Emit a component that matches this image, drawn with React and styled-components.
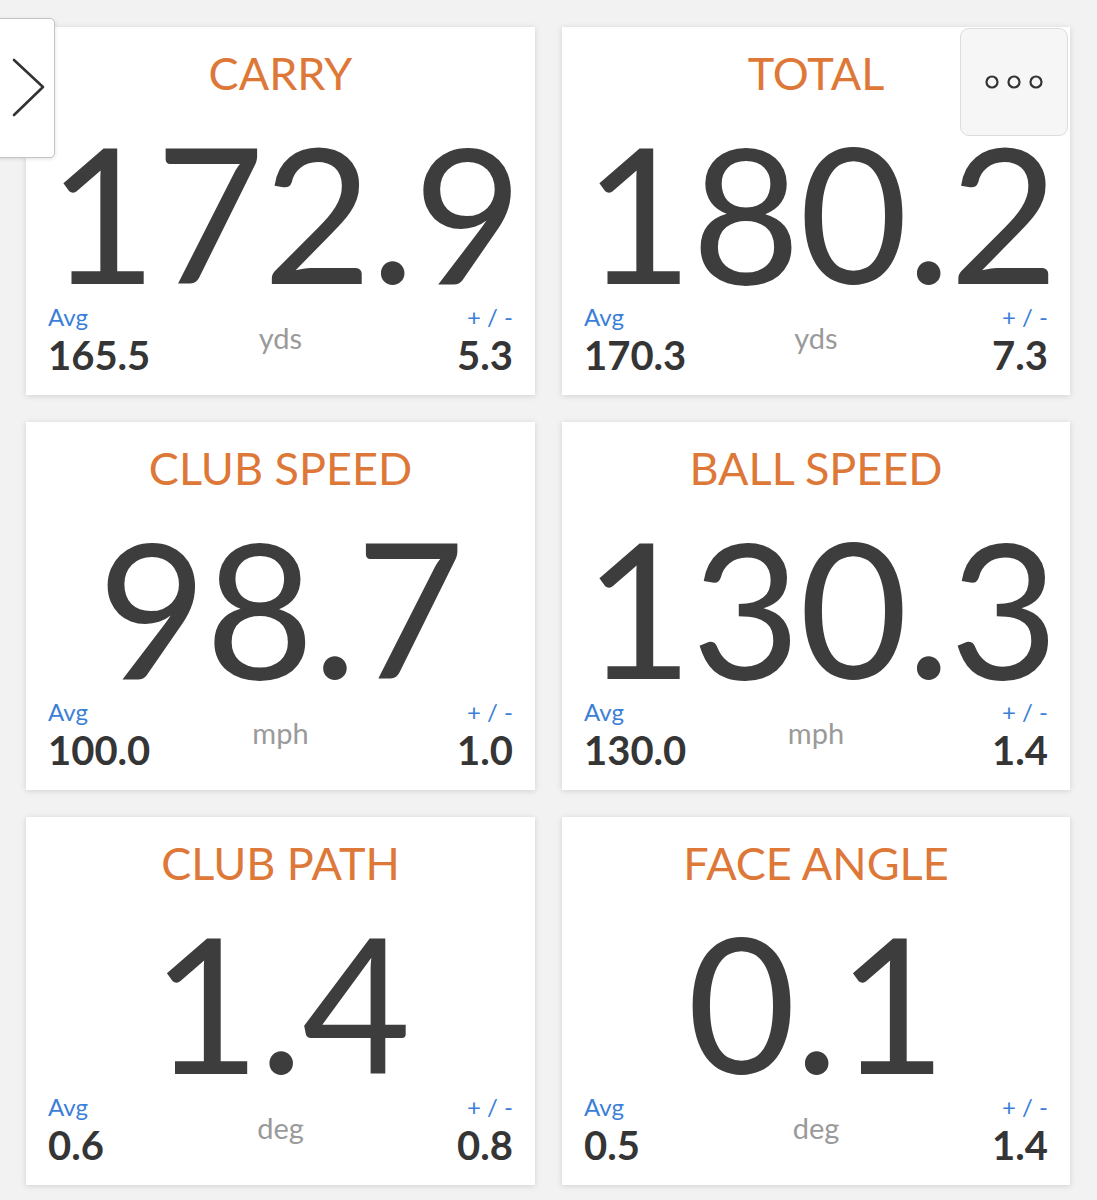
import React from "react";
import styled, { createGlobalStyle } from "styled-components";

const GlobalStyle = createGlobalStyle`
  html, body {
    margin: 0;
    padding: 0;
    background: #f2f2f2;
  }
  body {
    font-family: "Lato", "Open Sans", sans-serif;
  }
`;

const stats = [
  { title: "CARRY", value: "172.9", avg: "165.5", unit: "yds", dev: "5.3" },
  { title: "TOTAL", value: "180.2", avg: "170.3", unit: "yds", dev: "7.3", menu: true },
  { title: "CLUB SPEED", value: "98.7", avg: "100.0", unit: "mph", dev: "1.0" },
  { title: "BALL SPEED", value: "130.3", avg: "130.0", unit: "mph", dev: "1.4" },
  { title: "CLUB PATH", value: "1.4", avg: "0.6", unit: "deg", dev: "0.8" },
  { title: "FACE ANGLE", value: "0.1", avg: "0.5", unit: "deg", dev: "1.4" },
];

export default function App() {
  return (
    <Page>
      <GlobalStyle />
      <SideTab>
        <svg width="34" height="60" viewBox="0 0 34 60">
          <path d="M3 2 L32 29 L3 57" fill="none" stroke="#333" strokeWidth="2.6" strokeLinecap="round" strokeLinejoin="round" />
        </svg>
      </SideTab>
      <Grid>
        {stats.map((s) => (
          <Card key={s.title}>
            <Title>{s.title}</Title>
            <BigNumber>{s.value}</BigNumber>
            <Footer>
              <Side>
                <Label>Avg</Label>
                <Value>{s.avg}</Value>
              </Side>
              <Unit>{s.unit}</Unit>
              <Side $right>
                <Label>+ / -</Label>
                <Value>{s.dev}</Value>
              </Side>
            </Footer>
            {s.menu && (
              <MenuButton>
                <svg width="60" height="16" viewBox="0 0 60 16">
                  <circle cx="8" cy="8" r="5.5" fill="none" stroke="#333" strokeWidth="2.2" />
                  <circle cx="30" cy="8" r="5.5" fill="none" stroke="#333" strokeWidth="2.2" />
                  <circle cx="52" cy="8" r="5.5" fill="none" stroke="#333" strokeWidth="2.2" />
                </svg>
              </MenuButton>
            )}
          </Card>
        ))}
      </Grid>
    </Page>
  );
}

const Page = styled.div`
  position: relative;
  width: 1097px;
  height: 1200px;
  overflow: hidden;
  background: #f2f2f2;
`;

const Grid = styled.div`
  display: grid;
  grid-template-columns: 509px 508px;
  column-gap: 27px;
  row-gap: 27px;
  padding: 27px 0 0 26px;
`;

const Card = styled.div`
  position: relative;
  height: 368px;
  background: #fff;
  box-shadow: 0 1px 6px rgba(0, 0, 0, 0.14);
  display: flex;
  flex-direction: column;
  padding: 0 22px;
  box-sizing: border-box;
`;

const Title = styled.div`
  margin-top: 23px;
  font-size: 45px;
  line-height: 46px;
  text-align: center;
  color: #dd7838;
`;

const BigNumber = styled.div`
  margin-top: 21px;
  font-size: 188px;
  line-height: 188px;
  text-align: center;
  color: #3d3d3d;
  letter-spacing: -1.5px;
`;

const Footer = styled.div`
  display: grid;
  grid-template-columns: 1fr auto 1fr;
  align-items: start;
`;

const Side = styled.div`
  display: flex;
  flex-direction: column;
  align-items: ${(p) => (p.$right ? "flex-end" : "flex-start")};
  gap: 6px;
`;

const Label = styled.div`
  font-size: 24px;
  line-height: 24px;
  color: #3b7fd8;
`;

const Value = styled.div`
  font-size: 40px;
  line-height: 40px;
  font-weight: 700;
  color: #353535;
`;

const Unit = styled.div`
  margin-top: 19px;
  font-size: 29px;
  line-height: 28px;
  color: #9a9a9a;
`;

const SideTab = styled.div`
  position: absolute;
  left: -10px;
  top: 18px;
  width: 65px;
  height: 140px;
  background: #fff;
  border: 1px solid #c4c4c4;
  border-radius: 5px;
  box-shadow: 0 1px 4px rgba(0, 0, 0, 0.12);
  display: flex;
  align-items: center;
  justify-content: flex-end;
  padding-right: 9px;
  box-sizing: border-box;
  z-index: 2;
`;

const MenuButton = styled.div`
  position: absolute;
  top: 1px;
  right: 2px;
  width: 108px;
  height: 108px;
  background: #f6f6f6;
  border: 1px solid #dcdcdc;
  border-radius: 9px;
  box-sizing: border-box;
  display: flex;
  align-items: center;
  justify-content: center;
`;
